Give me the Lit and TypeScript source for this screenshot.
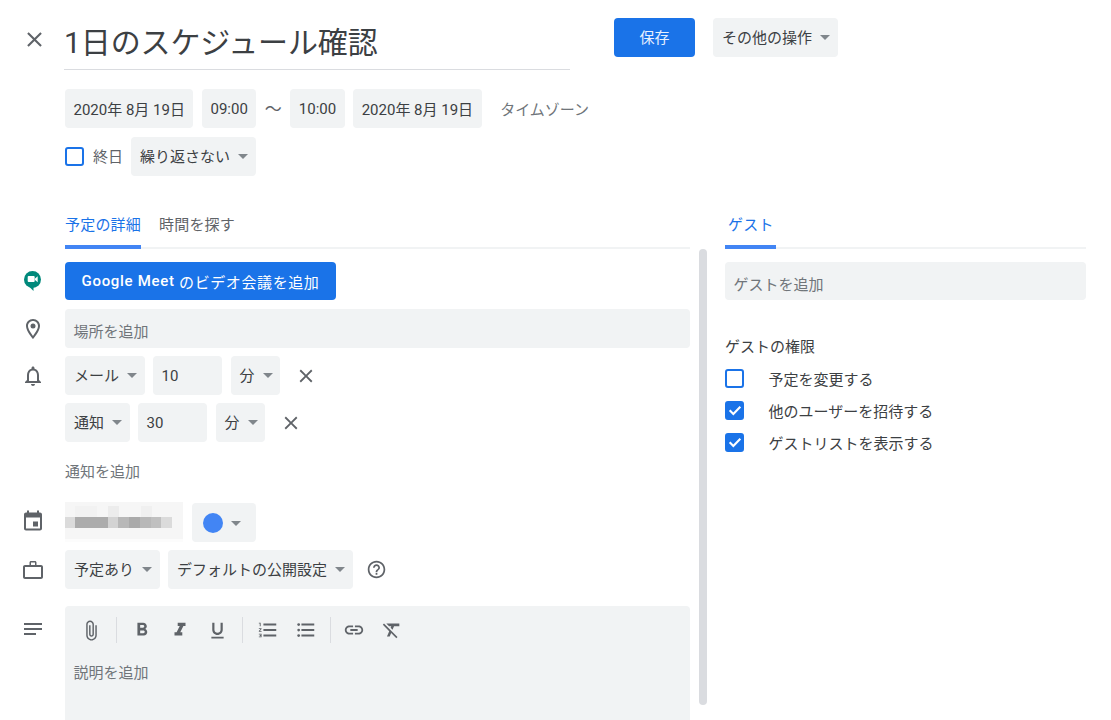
import { LitElement, html, css, svg } from "lit";
import { customElement } from "lit/decorators.js";

const icon = (size: number, body: unknown) =>
  html`<svg width=${size} height=${size} viewBox="0 0 24 24" fill="currentColor">${body}</svg>`;

const closeIcon = svg`<path d="M19 6.410 17.590 5 12 10.590 6.410 5 5 6.410 10.590 12 5 17.590 6.410 19 12 13.410 17.590 19 19 17.590 13.410 12z"/>`;
const pinIcon = svg`<path d="M12 2C8.130 2 5 5.130 5 9c0 5.250 7 13 7 13s7-7.750 7-13c0-3.870-3.130-7-7-7zM7 9c0-2.760 2.240-5 5-5s5 2.240 5 5c0 2.880-2.880 7.190-5 9.880C9.920 16.210 7 11.850 7 9z"/><circle cx="12" cy="9" r="2.500"/>`;
const bellIcon = svg`<path d="M12 22c1.100 0 2-.9 2-2h-4c0 1.100.9 2 2 2zm6-6v-5c0-3.070-1.630-5.640-4.500-6.320V4c0-.83-.67-1.500-1.500-1.500s-1.500.67-1.500 1.500v.68C7.640 5.360 6 7.920 6 11v5l-2 2v1h16v-1l-2-2zm-2 1H8v-6c0-2.480 1.510-4.500 4-4.500s4 2.020 4 4.500v6z"/>`;
const calIcon = svg`<path d="M17 12h-5v5h5v-5zM19 3h-1V1h-2v2H8V1H6v2H5c-1.110 0-1.990.9-1.990 2L3 19c0 1.100.89 2 2 2h14c1.100 0 2-.9 2-2V5c0-1.100-.9-2-2-2zm0 16H5V8h14v11z" transform="translate(0 .5)"/>`;
const caseIcon = svg`<path d="M20 7h-4.500V4.500c0-.8-.7-1.500-1.500-1.500h-4c-.8 0-1.500.7-1.500 1.500V7H4c-1.100 0-2 .9-2 2v10c0 1.100.9 2 2 2h16c1.100 0 2-.9 2-2V9c0-1.100-.9-2-2-2zM10 4.500h4V7h-4V4.500zm10 14.500H4V9h16v10z"/>`;
const notesIcon = svg`<path d="M3 6h18v2H3zM3 11h18v2H3zM3 16h12v2H3z"/>`;
const helpIcon = svg`<path d="M11 18h2v-2h-2v2zm1-16C6.480 2 2 6.480 2 12s4.480 10 10 10 10-4.480 10-10S17.520 2 12 2zm0 18c-4.410 0-8-3.590-8-8s3.590-8 8-8 8 3.590 8 8-3.590 8-8 8zm0-14c-2.210 0-4 1.790-4 4h2c0-1.100.9-2 2-2s2 .9 2 2c0 2-3 1.750-3 5h2c0-2.250 3-2.500 3-5 0-2.210-1.790-4-4-4z"/>`;
const clipIcon = svg`<path d="M12.500 23c-3 0-5.500-2.500-5.500-5.500V6c0-2.200 1.800-4 4-4s4 1.800 4 4v10.500c0 1.400-1.100 2.500-2.500 2.500S10 17.900 10 16.500V7h1.500v9.500c0 .55.45 1 1 1s1-.45 1-1V6c0-1.400-1.100-2.500-2.500-2.500S8.500 4.600 8.500 6v11.500c0 2.200 1.800 4 4 4s4-1.800 4-4V7H18v10.500c0 3-2.500 5.500-5.500 5.500z" transform="translate(-.5 -.5)"/>`;
const boldIcon = svg`<path d="M15.600 10.790c.97-.67 1.650-1.770 1.650-2.790 0-2.260-1.750-4-4-4H7v14h7.040c2.090 0 3.710-1.700 3.710-3.790 0-1.520-.86-2.820-2.150-3.420zM10 6.500h3c.83 0 1.500.67 1.500 1.500s-.67 1.500-1.500 1.500h-3v-3zm3.500 9H10v-3h3.500c.83 0 1.500.67 1.500 1.500s-.67 1.500-1.500 1.500z"/>`;
const italicIcon = svg`<path d="M9.500 4v3.500h2.200l-3.400 7H6V18h8.500v-3.500h-2.200l3.400-7H18V4z"/>`;
const underlineIcon = svg`<path d="M12 17c3.310 0 6-2.690 6-6V3h-2.500v8c0 1.930-1.570 3.500-3.500 3.500S8.500 12.930 8.500 11V3H6v8c0 3.310 2.690 6 6 6zm-7 2v2h14v-2H5z"/>`;
const olIcon = svg`<path d="M2 17h2v.5H3v1h1v.5H2v1h3v-4H2v1zm1-9h1V4H2v1h1v3zm-1 3h1.800L2 13.100v.9h3v-1H3.200L5 10.900V10H2v1zm5-6v2h14V5H7zm0 14h14v-2H7v2zm0-6h14v-2H7v2z"/>`;
const ulIcon = svg`<circle cx="4" cy="6" r="1.500"/><circle cx="4" cy="12" r="1.500"/><circle cx="4" cy="18" r="1.500"/><path d="M7 5h14v2H7zM7 11h14v2H7zM7 17h14v2H7z"/>`;
const linkIcon = svg`<path d="M3.900 12c0-1.710 1.390-3.100 3.100-3.100h4V7H7c-2.760 0-5 2.240-5 5s2.240 5 5 5h4v-1.900H7c-1.710 0-3.100-1.390-3.100-3.100zM8 13h8v-2H8v2zm9-6h-4v1.900h4c1.710 0 3.100 1.390 3.100 3.100s-1.390 3.100-3.100 3.100h-4V17h4c2.760 0 5-2.240 5-5s-2.240-5-5-5z"/>`;
const clearIcon = svg`<path d="M3.270 5 2 6.270l6.970 6.970L6.500 19h3l1.570-3.660L16.730 21 18 19.730 3.550 5.270 3.270 5zM6 5v.18L8.820 8h2.400l-.72 1.680 2.100 2.100L14.210 8H20V5H6z"/>`;
const checkIcon = svg`<path d="M4 12.500 9.500 18 20 7" fill="none" stroke="#fff" stroke-width="3.200"/>`;

// pixelated patch hiding the calendar name: [x, y, w, h, alpha of black]
const blurCells: number[][] = [
  [0, 1, 118, 37, 0.035],
  [0, 38, 118, 3, 0.012],
  [10, 5, 22, 11, 0.015],
  [43, 5, 11, 11, 0.04],
  [76, 5, 11, 11, 0.025],
  [0, 16, 10, 11, 0.11],
  [10, 16, 33, 11, 0.3],
  [43, 16, 10, 11, 0.14],
  [53, 16, 11, 11, 0.25],
  [64, 16, 11, 11, 0.31],
  [75, 16, 11, 11, 0.25],
  [86, 16, 10, 11, 0.22],
  [96, 16, 11, 11, 0.11],
];

@customElement("app-root")
export class AppRoot extends LitElement {
  static styles = css`
    :host {
      display: block;
      width: 1111px;
      height: 720px;
      overflow: hidden;
      background: #fff;
      color: #3c4043;
      font-family: Roboto, "Noto Sans CJK JP", sans-serif;
      font-size: 15px;
    }
    .page {
      display: flex;
      flex-direction: column;
      padding-top: 18px;
    }
    svg {
      display: block;
      flex: none;
    }
    .head {
      display: flex;
      align-items: flex-start;
    }
    .close {
      width: 64px;
      height: 44px;
      display: flex;
      justify-content: center;
      padding-left: 4px;
      box-sizing: border-box;
      padding-top: 9px;
      color: #5f6368;
    }
    .title {
      width: 506px;
      height: 51px;
      margin-right: 44px;
      border-bottom: 1px solid #dadce0;
      font-size: 30px;
      line-height: 50px;
      letter-spacing: -0.1px;
      color: #3c4043;
      white-space: nowrap;
    }
    .field {
      height: 39px;
      box-sizing: border-box;
      display: flex;
      align-items: center;
      background: #f1f3f4;
      border-radius: 4px;
      padding: 0 8.5px;
      white-space: nowrap;
      flex: none;
    }
    .select {
      padding: 0 7.5px 2px 9px;
    }
    .placeholder {
      color: #70757a;
    }
    .field.placeholder {
      padding-top: 4px;
    }
    .caret {
      width: 0;
      height: 0;
      border-left: 5px solid transparent;
      border-right: 5px solid transparent;
      border-top: 5px solid #80868b;
      margin-left: 8px;
      margin-top: 1px;
    }
    .primary {
      height: 39px;
      box-sizing: border-box;
      padding-bottom: 2px;
      display: flex;
      align-items: center;
      justify-content: center;
      background: #1a73e8;
      color: #fff;
      border-radius: 4px;
      flex: none;
    }
    .save {
      width: 81px;
      margin-right: 18px;
      color: #e8f0fe;
    }
    .row {
      display: flex;
      align-items: center;
      padding-left: 65px;
    }
    .when {
      margin-top: 19px;
      gap: 8.5px;
    }
    .tilde {
      width: 17px;
      font-size: 17px;
      color: #5f6368;
      padding-bottom: 2px;
    }
    .tz {
      margin-left: 10px;
      color: #70757a;
    }
    .allday {
      margin-top: 9px;
    }
    .box {
      width: 19px;
      height: 19px;
      box-sizing: border-box;
      border: 2px solid #1a73e8;
      border-radius: 3px;
      flex: none;
      display: flex;
      align-items: center;
      justify-content: center;
    }
    .box.on {
      background: #1a73e8;
    }
    .allday .box {
      margin-right: 9px;
    }
    .allday .label {
      margin-right: 8px;
      padding-bottom: 3px;
      color: #5f6368;
    }
    .body {
      display: flex;
      margin-top: 31px;
    }
    .main {
      width: 707px;
      flex: none;
      display: flex;
      flex-direction: column;
    }
    .tabs {
      margin-left: 65px;
      width: 625px;
      height: 42px;
      box-sizing: border-box;
      display: flex;
      gap: 18px;
      border-bottom: 2px solid #f1f3f4;
    }
    .tab {
      line-height: 36px;
      height: 42px;
      color: #5f6368;
      box-sizing: border-box;
      letter-spacing: 0.2px;
    }
    .tab.active {
      color: #1a73e8;
      border-bottom: 4px solid #4285f4;
      border-radius: 3px 3px 0 0;
    }
    .scrollarea {
      display: flex;
    }
    .rows {
      width: 699px;
      flex: none;
      display: flex;
      flex-direction: column;
      padding-top: 13px;
    }
    .scrollbar {
      width: 8px;
      height: 456px;
      border-radius: 4px;
      background: #dadce0;
    }
    .line {
      position: relative;
      display: flex;
      align-items: center;
      gap: 8.5px;
      padding-left: 65px;
      margin-bottom: 8px;
    }
    .line.first {
      margin-bottom: 9px;
    }
    .line.desc {
      margin-top: 9px;
    }
    .gutter {
      position: absolute;
      left: 20.5px;
      top: 8px;
      color: #5f6368;
    }
    .first .gutter {
      top: 7px;
    }
    .desc .gutter {
      top: 11px;
    }
    .meet {
      width: 271px;
      height: 38px;
      padding-bottom: 0;
      letter-spacing: 0.6px;
      white-space: pre;
    }
    .meet b {
      font-weight: 500;
      letter-spacing: 0.7px;
    }
    .wide {
      width: 625px;
      flex: none;
    }
    .line .num {
      width: 69px;
    }
    .x {
      color: #5f6368;
      margin-left: 6.5px;
    }
    .addnote {
      padding-left: 65px;
      line-height: 22px;
      margin-top: 11px;
      margin-bottom: 18px;
      color: #70757a;
    }
    .patch {
      position: relative;
      width: 118px;
      height: 41px;
      flex: none;
    }
    .cell {
      position: absolute;
    }
    .color {
      width: 64px;
      padding: 0 0 0 11px;
      margin-top: 2px;
    }
    .dot {
      width: 20px;
      height: 20px;
      border-radius: 50%;
      background: #4285f4;
    }
    .help {
      color: #5f6368;
      margin-left: 5px;
    }
    .editor {
      width: 625px;
      height: 120px;
      background: #f1f3f4;
      border-radius: 4px 4px 0 0;
      box-sizing: border-box;
      padding: 9px 0 0 7.5px;
      flex: none;
    }
    .toolbar {
      display: flex;
      align-items: center;
      color: #5f6368;
      height: 30px;
    }
    .tool {
      width: 38px;
      display: flex;
      justify-content: center;
      flex: none;
    }
    .tool.tight {
      margin-left: -1.500px;
    }
    .sep {
      width: 1px;
      height: 26px;
      margin: 0 5.5px;
      background: #dadce0;
      flex: none;
    }
    .editor .placeholder {
      margin-top: 17px;
      margin-left: 1px;
      line-height: 22px;
    }
    .side {
      margin-left: 18px;
      width: 361px;
      flex: none;
    }
    .side .tabs {
      margin-left: 0;
      width: 361px;
    }
    .side .tab {
      width: 51px;
      padding-left: 3px;
    }
    .guest {
      margin-top: 13px;
      width: 361px;
      height: 38px;
    }
    .perm-title {
      margin-top: 36px;
      line-height: 22px;
      margin-bottom: 4px;
    }
    .perm {
      display: flex;
      align-items: center;
      gap: 24.5px;
      height: 32px;
      color: #3c4043;
    }
  `;

  select(label: string) {
    return html`<div class="field select">${label}<span class="caret"></span></div>`;
  }

  reminder(kind: string, value: string, gutter: unknown = "") {
    return html`
      <div class="line">
        ${gutter}
        ${this.select(kind)}
        <div class="field num">${value}</div>
        ${this.select("分")}
        <div class="x">${icon(22, closeIcon)}</div>
      </div>
    `;
  }

  permission(label: string, checked: boolean) {
    return html`
      <div class="perm">
        <span class="box ${checked ? "on" : ""}">${checked ? icon(16, checkIcon) : ""}</span>
        ${label}
      </div>
    `;
  }

  render() {
    return html`
      <div class="page">
        <div class="head">
          <div class="close">${icon(25, closeIcon)}</div>
          <div class="title">1日のスケジュール確認</div>
          <div class="primary save">保存</div>
          ${this.select("その他の操作")}
        </div>

        <div class="row when">
          <div class="field">2020年 8月 19日</div>
          <div class="field">09:00</div>
          <span class="tilde">〜</span>
          <div class="field">10:00</div>
          <div class="field">2020年 8月 19日</div>
          <span class="tz">タイムゾーン</span>
        </div>
        <div class="row allday">
          <span class="box"></span>
          <span class="label">終日</span>
          ${this.select("繰り返さない")}
        </div>

        <div class="body">
          <div class="main">
            <div class="tabs">
              <div class="tab active">予定の詳細</div>
              <div class="tab">時間を探す</div>
            </div>
            <div class="scrollarea">
              <div class="rows">
                <div class="line first">
                  <div class="gutter">
                    <svg width="24" height="24" viewBox="0 0 24 24">
                      <circle cx="11.500" cy="10.500" r="8.500" fill="#00897b" />
                      <path fill="#00897b" d="M8 17.500 12.500 22v-4.500z" />
                      <rect x="6.700" y="7" width="7" height="6" rx="1" fill="#fff" />
                      <path fill="#fff" d="m14 9.500 2.700-2.200v6L14 11z" />
                    </svg>
                  </div>
                  <div class="primary meet"><b>Google Meet</b> のビデオ会議を追加</div>
                </div>
                <div class="line">
                  <div class="gutter">${icon(24, pinIcon)}</div>
                  <div class="field wide placeholder">場所を追加</div>
                </div>
                ${this.reminder("メール", "10", html`<div class="gutter">${icon(24, bellIcon)}</div>`)}
                ${this.reminder("通知", "30")}
                <div class="addnote">通知を追加</div>
                <div class="line">
                  <div class="gutter">${icon(24, calIcon)}</div>
                  <div class="patch">
                    ${blurCells.map(
                      ([x, y, w, h, a]) =>
                        html`<div
                          class="cell"
                          style="left:${x}px;top:${y}px;width:${w}px;height:${h}px;background:rgba(0,0,0,${a})"
                        ></div>`,
                    )}
                  </div>
                  <div class="field color">
                    <span class="dot"></span><span class="caret"></span>
                  </div>
                </div>
                <div class="line">
                  <div class="gutter">${icon(24, caseIcon)}</div>
                  ${this.select("予定あり")}
                  ${this.select("デフォルトの公開設定")}
                  <div class="help">${icon(21, helpIcon)}</div>
                </div>
                <div class="line desc">
                  <div class="gutter">${icon(24, notesIcon)}</div>
                  <div class="editor">
                    <div class="toolbar">
                      <div class="tool">${icon(23, clipIcon)}</div>
                      <div class="sep"></div>
                      <div class="tool">${icon(22, boldIcon)}</div>
                      <div class="tool">${icon(22, italicIcon)}</div>
                      <div class="tool">${icon(21, underlineIcon)}</div>
                      <div class="sep"></div>
                      <div class="tool">${icon(22, olIcon)}</div>
                      <div class="tool">${icon(22, ulIcon)}</div>
                      <div class="sep"></div>
                      <div class="tool tight">${icon(22, linkIcon)}</div>
                      <div class="tool">${icon(22, clearIcon)}</div>
                    </div>
                    <div class="placeholder">説明を追加</div>
                  </div>
                </div>
              </div>
              <div class="scrollbar"></div>
            </div>
          </div>

          <div class="side">
            <div class="tabs">
              <div class="tab active">ゲスト</div>
            </div>
            <div class="field guest placeholder">ゲストを追加</div>
            <div class="perm-title">ゲストの権限</div>
            ${this.permission("予定を変更する", false)}
            ${this.permission("他のユーザーを招待する", true)}
            ${this.permission("ゲストリストを表示する", true)}
          </div>
        </div>
      </div>
    `;
  }
}
